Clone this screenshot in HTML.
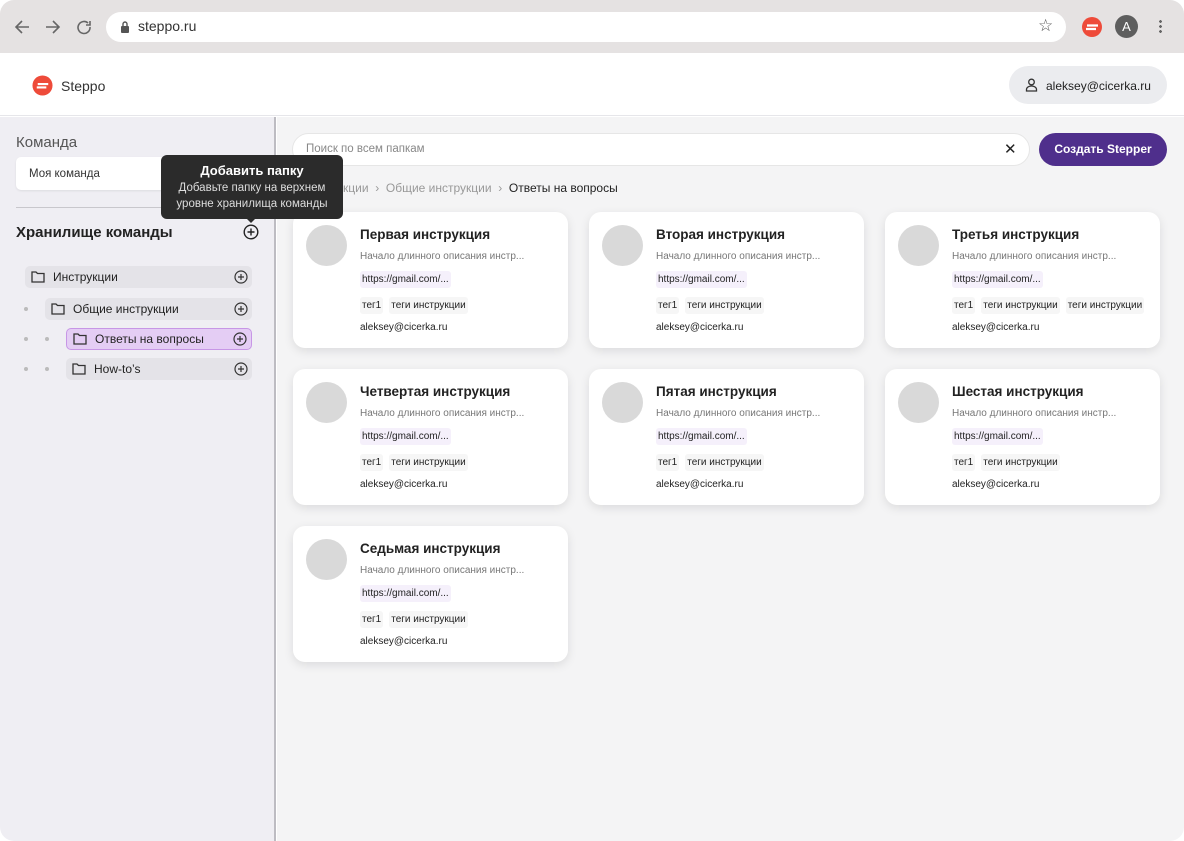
<!DOCTYPE html>
<html><head><meta charset="utf-8"><style>
*{box-sizing:border-box;margin:0;padding:0}
body{width:1184px;height:841px;overflow:hidden;background:#fff;font-family:"Liberation Sans","DejaVu Sans",sans-serif;color:#222;position:relative}
.abs{position:absolute}
.top{left:0;top:0;width:1184px;height:53px;background:#e5e2e2;border-radius:14px 14px 0 0}
.url{left:106px;top:12px;width:960px;height:30px;background:#fff;border-radius:15px}
.hdr{left:0;top:53px;width:1184px;height:63px;background:#fff;border-bottom:1px solid #e6e6ea}
.side{left:0;top:117px;width:276px;height:724px;background:#efeef3;border-right:2px solid #bdbcc2;border-radius:0 0 0 14px}
.main{left:277px;top:117px;width:907px;height:724px;background:#f4f4f5;border-radius:0 0 14px 0}
.card{position:absolute;width:275px;height:136px;background:#fff;border-radius:12px;box-shadow:0 3px 10px rgba(0,0,0,.1)}
.card .av{position:absolute;left:13px;top:13px;width:41px;height:41px;border-radius:50%;background:#d9d9d9}
.card .t{position:absolute;left:67px;top:15px;font-size:13.5px;font-weight:bold;color:#222}
.card .d{position:absolute;left:67px;top:39px;font-size:10px;color:#777}
.card .l{position:absolute;left:67px;top:59px;font-size:10px;padding:3px 2px;background:#f5f0fb;border-radius:3px;color:#222}
.card .g{position:absolute;left:67px;top:85px;font-size:10px;display:flex;gap:6px}
.card .g span{background:#f6f6f6;padding:3px 2px;border-radius:3px}
.card .e{position:absolute;left:67px;top:110px;font-size:10px;color:#222}
.fold{position:absolute;height:22px;background:#e4e3e8;border-radius:5px;font-size:12px;display:flex;align-items:center;padding-left:6px;gap:8px}
.plus{position:absolute;right:4px;top:4px}
.dot{position:absolute;width:4px;height:4px;border-radius:50%;background:#bbb}
.tip{z-index:10}
</style></head><body>
<div class="abs top"></div>
<svg class="abs" style="left:14px;top:18px" width="90" height="18" viewBox="0 0 90 18" fill="none" stroke="#666" stroke-width="1.6"><path d="M15 9H2M8 3L2 9l6 6"/><path d="M32 9h13M39 3l6 6-6 6"/><path d="M74 5a6 6 0 1 0 2 4M76 3v4h-4"/></svg>
<div class="abs url"></div>
<svg class="abs" style="left:120px;top:21px" width="10" height="12" viewBox="0 0 10 12"><rect x="1" y="5" width="8" height="7" rx="1" fill="#555"/><path d="M3 5V3a2 2 0 0 1 4 0v2" stroke="#555" fill="none" stroke-width="1.4"/></svg>
<div class="abs" style="left:138px;top:18px;font-size:14px;color:#333">steppo.ru</div>
<div class="abs" style="left:1038px;top:16px;font-size:17px;color:#555">☆</div>
<svg class="abs" style="left:1081px;top:16px" width="22" height="22" viewBox="0 0 22 22"><circle cx="11" cy="11" r="10" fill="#ee4b3a"/><path d="M6 9.5h11M5 13h10" stroke="#fff" stroke-width="2.2"/></svg>
<div class="abs" style="left:1115px;top:15px;width:23px;height:23px;border-radius:50%;background:#5e5e5e;color:#fff;font-size:13px;text-align:center;line-height:23px">A</div>
<div class="abs" style="left:1159px;top:19px;width:3px;height:15px;background:radial-gradient(circle,#666 1.3px,transparent 1.5px) 0 0/3px 5px"></div>
<div class="abs hdr"></div>
<svg class="abs" style="left:32px;top:75px" width="21" height="21" viewBox="0 0 22 22"><circle cx="11" cy="11" r="10.5" fill="#ee4b3a"/><path d="M6 9.5h11M5 13h10" stroke="#fff" stroke-width="2.2"/></svg>
<div class="abs" style="left:61px;top:78px;font-size:14px;color:#333">Steppo</div>
<div class="abs" style="left:1009px;top:66px;width:158px;height:38px;border-radius:19px;background:#ebecef"></div>
<svg class="abs" style="left:1025px;top:78px" width="13" height="14" viewBox="0 0 13 14" fill="none" stroke="#333" stroke-width="1.3"><circle cx="6.5" cy="4" r="2.8"/><path d="M1.5 13v-1.5a5 3.5 0 0 1 10 0V13z"/></svg>
<div class="abs" style="left:1046px;top:79px;font-size:12px;color:#222">aleksey@cicerka.ru</div>
<div class="abs side"></div>
<div class="abs" style="left:16px;top:134px;font-size:15px;color:#555">Команда</div>
<div class="abs" style="left:16px;top:157px;width:240px;height:33px;background:#fff;border-radius:5px;box-shadow:0 1px 2px rgba(0,0,0,.08)"></div>
<div class="abs" style="left:29px;top:168px;font-size:11.5px;color:#333">Моя команда</div>
<div class="abs" style="left:16px;top:207px;width:244px;height:1px;background:#c8c7cc"></div>
<div class="abs" style="left:16px;top:224px;font-size:15px;font-weight:bold;color:#222">Хранилище команды</div>
<svg class="abs" style="left:243px;top:224px" width="16" height="16" viewBox="0 0 16 16" fill="none" stroke="#222" stroke-width="1.4"><circle cx="8" cy="8" r="6.8"/><path d="M8 4.5v7M4.5 8h7"/></svg>
<svg width="0" height="0" style="position:absolute"><defs><symbol id="f" viewBox="0 0 14 12"><path d="M1 1h4l1.5 1.5H13V11H1z" fill="none" stroke="#333" stroke-width="1.3"/></symbol><symbol id="p" viewBox="0 0 14 14"><circle cx="7" cy="7" r="6" fill="none" stroke="#333" stroke-width="1.2"/><path d="M7 4v6M4 7h6" stroke="#333" stroke-width="1.2"/></symbol></defs></svg>
<div class="fold" style="left:25px;top:266px;width:227px"><svg width="14" height="12"><use href="#f"/></svg>Инструкции<svg class="plus" width="14" height="14"><use href="#p"/></svg></div>
<div class="dot" style="left:24px;top:307px"></div>
<div class="fold" style="left:45px;top:298px;width:207px"><svg width="14" height="12"><use href="#f"/></svg>Общие инструкции<svg class="plus" width="14" height="14"><use href="#p"/></svg></div>
<div class="dot" style="left:24px;top:337px"></div><div class="dot" style="left:45px;top:337px"></div>
<div class="fold" style="left:66px;top:328px;width:186px;background:#e4cdf4;border:1px solid #c796e6"><svg width="14" height="12"><use href="#f"/></svg>Ответы на вопросы<svg class="plus" width="14" height="14" style="top:3px"><use href="#p"/></svg></div>
<div class="dot" style="left:24px;top:367px"></div><div class="dot" style="left:45px;top:367px"></div>
<div class="fold" style="left:66px;top:358px;width:186px"><svg width="14" height="12"><use href="#f"/></svg>How-to’s<svg class="plus" width="14" height="14"><use href="#p"/></svg></div>
<div class="abs main"></div>
<div class="abs" style="left:292px;top:133px;width:738px;height:33px;background:#fff;border-radius:17px;border:1px solid #e6e6e6"></div>
<div class="abs" style="left:306px;top:143px;font-size:11.5px;color:#888">Поиск по всем папкам</div>
<div class="abs" style="left:1004px;top:140px;font-size:15px;color:#222">✕</div>
<div class="abs" style="left:1039px;top:133px;width:128px;height:33px;background:#4f2f8c;border-radius:17px;color:#fff;font-size:12px;font-weight:bold;text-align:center;line-height:33px">Создать Stepper</div>
<div class="abs" style="left:343px;top:181px;font-size:12px;color:#999">кции &nbsp;›&nbsp; Общие инструкции &nbsp;›&nbsp; <span style="color:#222">Ответы на вопросы</span></div>

<div class="abs tip" style="left:161px;top:155px;width:182px;height:64px;background:#2b2b2b;border-radius:6px;color:#fff;text-align:center"><div style="font-size:13px;font-weight:bold;margin-top:8px">Добавить папку</div><div style="font-size:11.5px;line-height:16px;margin-top:2px;color:#ddd">Добавьте папку на верхнем<br>уровне хранилища команды</div></div>
<div class="abs tip" style="left:246px;top:218px;width:0;height:0;border-left:5px solid transparent;border-right:5px solid transparent;border-top:5px solid #2b2b2b"></div>

<div class="card" style="left:293px;top:212px"><div class="av"></div><div class="t">Первая инструкция</div><div class="d">Начало длинного описания инстр...</div><div class="l">https://gmail.com/...</div><div class="g"><span>тег1</span><span>теги инструкции</span></div><div class="e">aleksey@cicerka.ru</div></div>
<div class="card" style="left:589px;top:212px"><div class="av"></div><div class="t">Вторая инструкция</div><div class="d">Начало длинного описания инстр...</div><div class="l">https://gmail.com/...</div><div class="g"><span>тег1</span><span>теги инструкции</span></div><div class="e">aleksey@cicerka.ru</div></div>
<div class="card" style="left:885px;top:212px"><div class="av"></div><div class="t">Третья инструкция</div><div class="d">Начало длинного описания инстр...</div><div class="l">https://gmail.com/...</div><div class="g"><span>тег1</span><span>теги инструкции</span><span>теги инструкции</span></div><div class="e">aleksey@cicerka.ru</div></div>
<div class="card" style="left:293px;top:369px"><div class="av"></div><div class="t">Четвертая инструкция</div><div class="d">Начало длинного описания инстр...</div><div class="l">https://gmail.com/...</div><div class="g"><span>тег1</span><span>теги инструкции</span></div><div class="e">aleksey@cicerka.ru</div></div>
<div class="card" style="left:589px;top:369px"><div class="av"></div><div class="t">Пятая инструкция</div><div class="d">Начало длинного описания инстр...</div><div class="l">https://gmail.com/...</div><div class="g"><span>тег1</span><span>теги инструкции</span></div><div class="e">aleksey@cicerka.ru</div></div>
<div class="card" style="left:885px;top:369px"><div class="av"></div><div class="t">Шестая инструкция</div><div class="d">Начало длинного описания инстр...</div><div class="l">https://gmail.com/...</div><div class="g"><span>тег1</span><span>теги инструкции</span></div><div class="e">aleksey@cicerka.ru</div></div>
<div class="card" style="left:293px;top:526px"><div class="av"></div><div class="t">Седьмая инструкция</div><div class="d">Начало длинного описания инстр...</div><div class="l">https://gmail.com/...</div><div class="g"><span>тег1</span><span>теги инструкции</span></div><div class="e">aleksey@cicerka.ru</div></div>
</body></html>
